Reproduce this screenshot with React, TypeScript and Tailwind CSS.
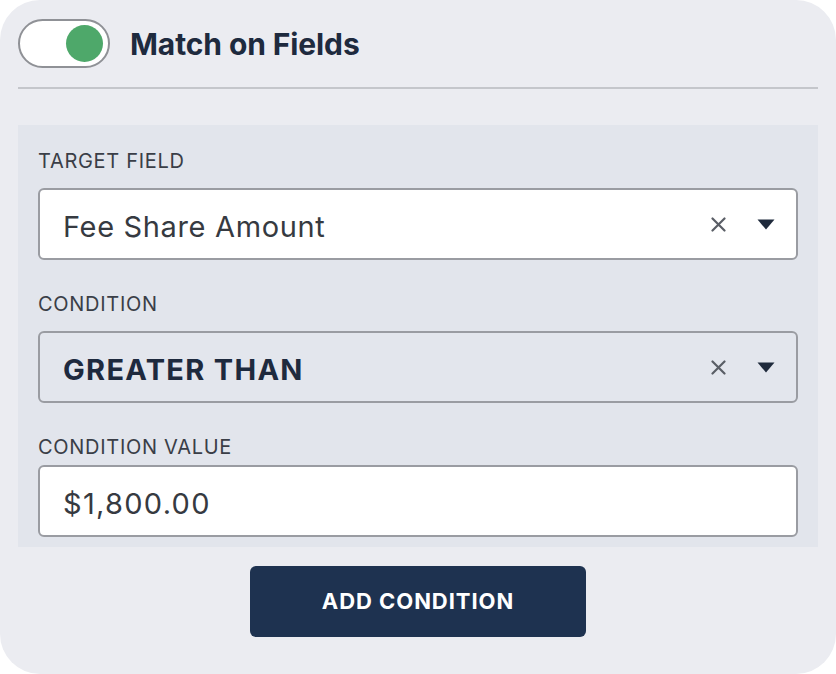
import React from "react";

function Caret() {
  return (
    <svg width="18" height="11" viewBox="0 0 18 11" className="block">
      <path d="M0.5 0.5 H17.5 L9 10.5 Z" fill="#1f2a3c" />
    </svg>
  );
}

function Clear() {
  return (
    <svg width="15" height="15" viewBox="0 0 15 15" className="block">
      <path d="M1.5 1.5 L13.5 13.5 M13.5 1.5 L1.5 13.5" stroke="#5a5e66" strokeWidth="2.2" strokeLinecap="round" />
    </svg>
  );
}

function Label({ children }: { children: React.ReactNode }) {
  return (
    <div className="h-[20px] text-[20px] leading-[20px] text-[#3a3e47] tracking-[0.7px] uppercase">
      {children}
    </div>
  );
}

export default function App() {
  return (
    <div className="w-[836px] h-[674px] bg-white" style={{ fontFamily: "Inter, 'Open Sans', sans-serif" }}>
      <div className="w-full h-full rounded-[40px] bg-[#ebecf1] px-[18px] pt-[19px] flex flex-col">
        <div className="flex items-center gap-[20px] h-[49px]">
          <div className="w-[92px] h-[49px] rounded-full border-2 border-[#8f9196] bg-white flex items-center justify-end pr-[5px]">
            <div className="w-[37px] h-[37px] rounded-full bg-[#4ea86a]" />
          </div>
          <div className="text-[30px] font-bold text-[#1e2a3e] leading-none tracking-[-0.1px] pt-[1px]">Match on Fields</div>
        </div>
        <div className="mt-[19px] h-[2px] bg-[#c4c6cb]" />
        <div className="mt-[36px] bg-[#e2e5ec] px-[20px] pt-[26px] pb-[10px] flex flex-col">
          <Label>Target Field</Label>
          <div className="mt-[17px] h-[72px] bg-white border-2 border-[#9a9ca2] rounded-[6px] flex items-center pl-[23px] pr-[21px]">
            <div className="flex-1 text-[29px] text-[#363a41] tracking-[0.65px] pt-[5px]">Fee Share Amount</div>
            <Clear />
            <div className="w-[31px]" />
            <Caret />
          </div>
          <div className="mt-[34px]"><Label>Condition</Label></div>
          <div className="mt-[17px] h-[72px] bg-[#e3e6ed] border-2 border-[#9a9ca2] rounded-[6px] flex items-center pl-[23px] pr-[21px]">
            <div className="flex-1 text-[29px] font-bold text-[#1e2a3e] tracking-[1.3px] pt-[5px]">GREATER THAN</div>
            <Clear />
            <div className="w-[31px]" />
            <Caret />
          </div>
          <div className="mt-[34px]"><Label>Condition Value</Label></div>
          <div className="mt-[8px] h-[72px] bg-white border-2 border-[#9a9ca2] rounded-[6px] flex items-center pl-[23px]">
            <div className="text-[29px] text-[#363a41] tracking-[1.3px] pt-[5px]">$1,800.00</div>
          </div>
        </div>
        <div className="mt-[19px] flex justify-center">
          <div className="w-[336px] h-[71px] rounded-[6px] bg-[#1e3250] flex items-center justify-center text-white font-bold text-[22px] tracking-[0.95px]">
            ADD CONDITION
          </div>
        </div>
      </div>
    </div>
  );
}
